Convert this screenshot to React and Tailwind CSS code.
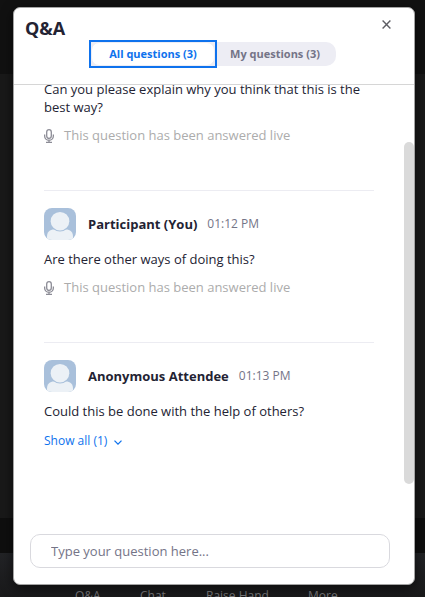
const items = [
  { name: 'Participant (You)', time: '01:12 PM', text: 'Are there other ways of doing this?', live: true },
  { name: 'Anonymous Attendee', time: '01:13 PM', text: 'Could this be done with the help of others?', live: false },
];

function Avatar() {
  return (
    <svg className="block size-8 shrink-0 rounded-lg" viewBox="0 0 32 32">
      <rect width="32" height="32" fill="#a9c0db" />
      <path d="M3 32V28.500c0-4.500 3-7 7-7h12c4 0 7 2.500 7 7V32Z" fill="#ecf1f6" />
      <circle cx="16" cy="13.200" r="10.300" fill="#a9c0db" />
      <circle cx="16" cy="13.200" r="9.300" fill="#ecf1f6" />
    </svg>
  );
}

function AnsweredLive() {
  return (
    <div className="flex h-[18px] items-center text-[13px] leading-[18px] text-[#acacac]">
      <svg className="mt-[2px] mr-[10px] block h-[14px] w-[10px]" viewBox="0 0 10 14" fill="none" stroke="#8c8c96" strokeWidth="1.300">
        <rect x="2.700" y="0.650" width="4.600" height="8.700" rx="2.300" />
        <path d="M.65 5.500v1.400a4.350 4.350 0 0 0 8.700 0V5.500M5 11.300v2M2 13.350h6" />
      </svg>
      <span className="whitespace-nowrap">This question has been answered live</span>
    </div>
  );
}

function Question({ name, time, text, live }) {
  return (
    <article className="h-[152px] border-t border-[#ececf2] pt-[17px]">
      <div className="flex h-8 items-center">
        <Avatar />
        <span className="ml-3 text-[13px] leading-[18px] font-bold whitespace-nowrap text-[#232333]">{name}</span>
        <span className="ml-[10px] text-[12px] leading-[18px] whitespace-nowrap text-[#747487]">{time}</span>
      </div>
      <p className="mt-[10px] mb-[10px] text-[13px] leading-[18px] text-[#232333]">{text}</p>
      {live ? (
        <AnsweredLive />
      ) : (
        <button className="mt-[12px] flex h-[18px] items-center text-[12px] leading-[18px] text-[#0e72ed]">
          Show all (1)
          <svg className="mt-[2px] ml-[7px] h-[5px] w-[8px]" viewBox="0 0 8 5" fill="none" stroke="currentColor" strokeWidth="1.300">
            <path d="M.5.600 4 4.100 7.500.600" />
          </svg>
        </button>
      )}
    </article>
  );
}

export default function App() {
  return (
    <div className="relative flex h-[597px] w-[425px] flex-col overflow-hidden bg-[#191919] font-['Open_Sans',sans-serif]">
      <div className="h-[74px] shrink-0 bg-[#111111]" />
      <div className="flex-1" />
      <div className="h-[35px] shrink-0 bg-[#0f0f0f]" />
      <div className="flex h-11 shrink-0 items-start overflow-hidden bg-linear-to-b from-[#222326] to-[#19191a] pt-[35px] text-[12px] leading-[16px] text-[#77777a]">
        <span className="ml-[75px] w-[65px]">Q&amp;A</span>
        <span className="w-[66px]">Chat</span>
        <span className="w-[102px]">Raise Hand</span>
        <span>More</span>
      </div>

      <section className="absolute top-[7px] left-[13px] flex h-[578px] w-[402px] flex-col overflow-hidden rounded-[7px] border border-[#a3a3a3] bg-white shadow-[0_3px_12px_rgba(0,0,0,0.6)]">
        <header className="h-[77px] shrink-0 border-b border-[#d6d6d6]">
          <div className="flex h-8 items-start justify-between pr-[23px] pl-[11px]">
            <h1 className="pt-[8px] text-[18px] leading-[24px] font-bold text-[#232333]">Q&amp;A</h1>
            <svg className="mt-[12px] block size-[9px]" viewBox="0 0 9 9" fill="none" stroke="#5d5d63" strokeWidth="1.400">
              <path d="m.6.600 7.800 7.800M8.400.600.600 8.400" />
            </svg>
          </div>
          <nav className="ml-[75px] flex h-7 items-center text-[11px] font-bold">
            <button className="h-7 w-32 border-2 border-[#0e72ed] bg-[#ededf4]">
              <span className="flex h-6 items-center justify-center rounded-lg border border-[#ededf4] bg-white whitespace-nowrap text-[#0e72ed]">All questions (3)</span>
            </button>
            <button className="h-6 w-[119px] rounded-r-[10px] bg-[#ededf4] pr-[3px] whitespace-nowrap text-[#747487]">My questions (3)</button>
          </nav>
        </header>

        <main className="flex h-[422px] shrink-0 items-start justify-between overflow-hidden">
          <div className="ml-[30px] w-[330px]">
            <article className="-mt-[5px] h-[110px]">
              <p className="mb-[10px] text-[13px] leading-[18px] text-[#232333]">
                Can you please explain why you think that this is the best way?
              </p>
              <AnsweredLive />
            </article>
            {items.map((item) => <Question key={item.time} {...item} />)}
          </div>
          <div className="mt-[57px] h-[342px] w-[10px] rounded-full bg-[#dadada]" />
        </main>

        <footer className="px-4 pt-[27px]">
          <input
            className="block h-[34px] w-[360px] rounded-[10px] border border-[#d9d9de] px-5 text-[13px] text-[#232333] outline-none placeholder:text-[#747487]"
            placeholder="Type your question here..."
          />
        </footer>
      </section>
    </div>
  );
}
